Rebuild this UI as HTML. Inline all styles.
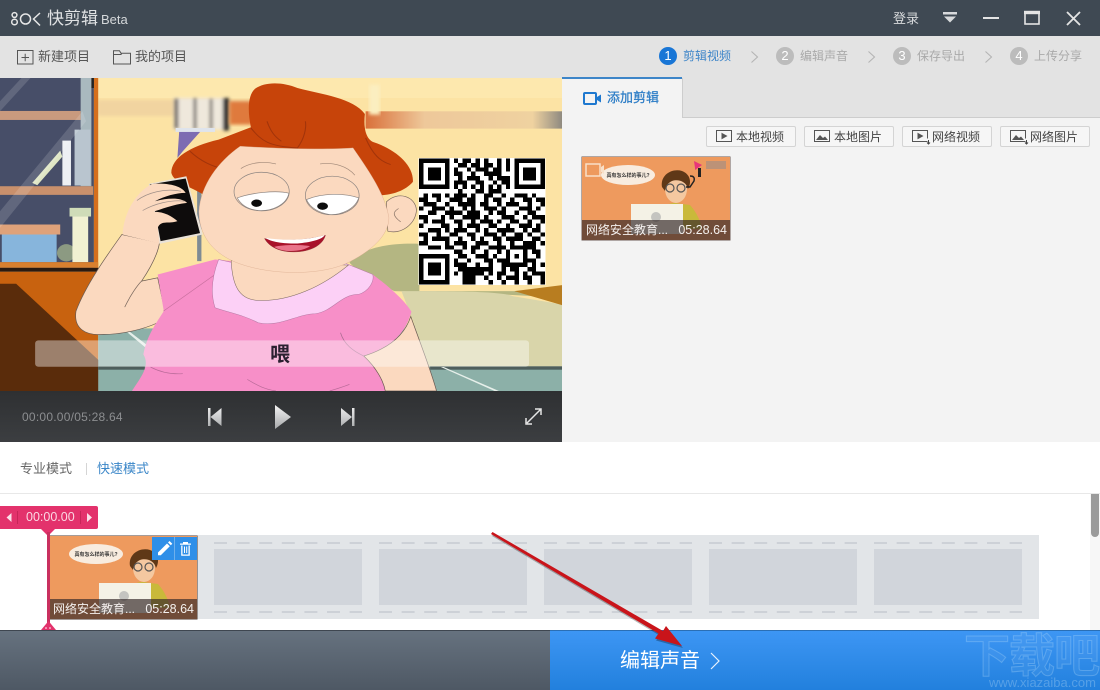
<!DOCTYPE html>
<html><head><meta charset="utf-8">
<style>
*{box-sizing:border-box;margin:0;padding:0}
html,body{width:1100px;height:690px;overflow:hidden;background:#fff;font-family:"Liberation Sans","Noto Sans CJK SC",sans-serif}
.a{position:absolute;white-space:nowrap}
svg{position:absolute;display:block;overflow:visible}
.btn{position:absolute;top:126px;width:90px;height:21px;background:#f6f6f6;border:1px solid #d4d4d4;border-radius:2px;font-size:12px;color:#444;line-height:20px;padding-left:29px;white-space:nowrap}
.num{position:absolute;top:47px;width:18px;height:18px;border-radius:50%;background:#bcbcbc;color:#fff;font-size:13px;line-height:18px;text-align:center}
.st{position:absolute;top:48px;font-size:12px;line-height:17px;color:#a9a9a9;white-space:nowrap}
.cell{position:absolute;top:549px;height:56px;background:#d1d5db}
</style></head><body>

<!-- title bar -->
<div class="a" style="left:0;top:0;width:1100px;height:36px;background:#3f4953"></div>
<svg style="left:10px;top:11px" width="32" height="16" viewBox="0 0 32 16" fill="none" stroke="#e6e6e6" stroke-width="1.5">
<circle cx="4.5" cy="4" r="2.4"/><circle cx="4.5" cy="11" r="2.800"/><circle cx="15.500" cy="8" r="5"/><path d="M30 2l-6.500 6 6.500 6.500"/></svg>
<div class="a" style="left:47px;top:9px;font-size:17px;line-height:20px;color:#dfe1e3">快剪辑</div>
<div class="a" style="left:101px;top:12px;font-size:13px;line-height:16px;color:#d5d8da">Beta</div>
<div class="a" style="left:893px;top:10px;font-size:13px;line-height:17px;color:#d8dadc">登录</div>
<svg style="left:940px;top:8px" width="150" height="20" viewBox="0 0 150 20" fill="none">
<path d="M3 4h14v2.500H3zM4 8.500h12L10 14.500z" fill="#d8dadc"/>
<path d="M43 10h16" stroke="#e4e4e4" stroke-width="2"/>
<rect x="85" y="4" width="14" height="12" stroke="#e4e4e4" stroke-width="1.600"/><path d="M84 4.500h16" stroke="#e4e4e4" stroke-width="3.400"/>
<path d="M127 4l13 13M140 4l-13 13" stroke="#e4e4e4" stroke-width="1.800"/></svg>

<!-- toolbar -->
<div class="a" style="left:0;top:36px;width:1100px;height:42px;background:#e3e3e3"></div>
<svg style="left:17px;top:50px" width="17" height="15" viewBox="0 0 17 15" fill="none" stroke="#555"><rect x=".5" y=".5" width="15.500" height="13.500"/><path d="M4.500 7.500h7.500M8.200 3.800v7.500"/></svg>
<div class="a" style="left:38px;top:48px;font-size:13px;line-height:18px;color:#555">新建项目</div>
<svg style="left:113px;top:50px" width="18" height="15" viewBox="0 0 18 15" fill="none" stroke="#555"><path d="M.5 14V.8h6l1.500 2.400h9.500V14zM.5 4.500H8l.8-1.300"/></svg>
<div class="a" style="left:135px;top:48px;font-size:13px;line-height:18px;color:#555">我的项目</div>

<div class="num" style="left:659px;background:#1976d6">1</div><div class="st" style="left:683px;color:#3c84c8">剪辑视频</div>
<div class="num" style="left:776px">2</div><div class="st" style="left:800px">编辑声音</div>
<div class="num" style="left:893px">3</div><div class="st" style="left:917px">保存导出</div>
<div class="num" style="left:1010px">4</div><div class="st" style="left:1034px">上传分享</div>
<svg style="left:750px;top:50px" width="250" height="14" viewBox="0 0 250 14" fill="none" stroke="#b4b4b4" stroke-width="1.100"><path d="M1.500 1.500l6 5.500-6 5.500M118.500 1.500l6 5.500-6 5.500M235.500 1.500l6 5.500-6 5.500"/></svg>

<!-- video scene -->
<div class="a" style="left:0;top:78px;width:562px;height:313px;overflow:hidden;background:#fbe09f">
<svg style="left:0;top:0" width="562" height="313" viewBox="0 0 1568 940" preserveAspectRatio="none">
<defs>
<linearGradient id="band" x1="0" x2="1" y1="0" y2="0"><stop offset="0" stop-color="#d9703a"/><stop offset=".3" stop-color="#eec89a"/><stop offset=".85" stop-color="#efd2a0"/><stop offset="1" stop-color="#8f8a80"/></linearGradient>
<filter id="b3"><feGaussianBlur stdDeviation="5"/></filter>
</defs>
<rect width="1568" height="940" fill="#fce3a4"/>
<rect x="272" y="0" width="1296" height="60" fill="#fde8ae"/>
<rect x="272" y="66" width="430" height="48" fill="#f1d4a0" filter="url(#b3)"/>
<rect x="1020" y="100" width="548" height="52" fill="url(#band)"/>
<rect x="1030" y="20" width="30" height="90" fill="#fbeec0" filter="url(#b3)"/>
<!-- shelf -->
<rect width="262" height="570" fill="#474e68"/>
<rect x="262" width="12" height="570" fill="#d56f1d"/>
<rect x="252" width="10" height="30" fill="#222"/>
<path d="M225 0h30v325h-30z" fill="#a9b9bf"/>
<rect y="99" width="225" height="27" fill="#c99a7e"/>
<rect y="325" width="260" height="26" fill="#c9906c"/>
<path d="M90 315L168 218l6 18-70 86z" fill="#dfe6c4"/>
<rect x="174" y="188" width="24" height="135" fill="#eef0f4"/>
<rect x="208" y="155" width="44" height="168" fill="#b9c5cf"/>
<rect x="0" y="440" width="168" height="30" fill="#dfa27a"/>
<rect x="5" y="470" width="153" height="83" fill="#87b5dc"/>
<circle cx="185" cy="525" r="26" fill="#8c9a82"/>
<rect x="194" y="390" width="60" height="26" fill="#cfdcb8"/>
<rect x="202" y="416" width="44" height="137" fill="#f1f1d2"/>
<path d="M60 0L0 70v30L85 0zM230 100L0 400v50L240 130z" fill="#fff" opacity=".14"/>
<rect y="553" width="274" height="17" fill="#d9802f"/>
<rect y="570" width="274" height="12" fill="#2a1a10"/>
<rect y="582" width="274" height="360" fill="#c8620f"/>
<path d="M0 618h45l323 322H0z" fill="#5a2c0b"/>
<!-- bed/floor -->
<path d="M975 555C1010 505 1100 495 1170 498V640H1568V660L1400 650 1100 640 1010 590z" fill="#b4b682"/>
<path d="M1120 640C1250 640 1400 640 1430 655L1568 680V860H1200z" fill="#d9d5aa"/>
<path d="M1435 640L1568 622V682z" fill="#b87d20"/>
<rect x="274" y="752" width="1294" height="188" fill="#8cb0a8"/>
<path d="M1120 740H1568V866H1195z" fill="#d9d5aa"/>
<rect x="1200" y="866" width="368" height="10" fill="#4e5e5c"/>
<rect x="274" y="866" width="130" height="10" fill="#4e5e5c"/>
<path d="M1230 868l150 72h12l-154-72zM350 752l60 50-6 6-62-56z" fill="#e6efea"/>
<!-- fork / stand -->
<rect x="550" y="220" width="12" height="330" fill="#7e8b94"/>
<g filter="url(#b3)"><rect x="485" y="60" width="150" height="95" fill="#efe8dc"/>
<rect x="487" y="62" width="10" height="90" fill="#56504f"/><rect x="540" y="60" width="8" height="95" fill="#5a5655"/><rect x="585" y="62" width="8" height="92" fill="#6c6660"/><rect x="622" y="60" width="16" height="98" fill="#1d1c22"/></g>
<rect x="640" y="70" width="70" height="70" fill="#df7a3c" filter="url(#b3)"/>
<path d="M500 160h60l-25 30-25 30-15 20z" fill="#7d6cb2"/>
<rect x="490" y="150" width="110" height="12" fill="#dfe4ec"/>
<!-- left arm -->
<path d="M340 470C300 530 240 620 212 700 205 750 235 775 290 770 340 770 400 755 440 735L460 700 440 600 395 610C420 570 440 530 445 495z" fill="#fbd9bf" stroke="#6a5a52" stroke-width="2"/>
<path d="M348 688C365 650 385 620 395 610" fill="none" stroke="#77665c" stroke-width="2"/>
<!-- dress -->
<path d="M368 940C392 900 420 865 400 830 410 770 440 730 457 700L440 590 600 545 1040 590C1090 630 1130 670 1148 702 1130 770 1090 810 1015 835 1050 870 1070 910 1075 940z" fill="#f78fc8"/>
<path d="M1015 835C1090 810 1130 770 1146 716 1170 790 1200 870 1218 940H1075C1070 910 1050 870 1015 835z" fill="#fbd9bf" stroke="#6a5a52" stroke-width="2"/>
<path d="M950 765C960 800 985 820 1015 835" fill="none" stroke="#a86a90" stroke-width="2"/>
<path d="M420 868C450 885 480 890 510 888M690 905C720 925 740 935 770 940M920 940C950 930 965 925 975 920" fill="none" stroke="#b86a98" stroke-width="2"/>
<path d="M600 590L456 700" fill="none" stroke="#c8709e" stroke-width="2"/>
<!-- collar -->
<path d="M610 545C590 600 588 650 600 690 640 705 680 712 720 735 780 750 830 708 880 708 930 700 950 650 1000 650 1030 640 1045 610 1040 590L960 555H650z" fill="#fcd0f6" stroke="#b87aa6" stroke-width="1.500"/>
<path d="M645 548C648 620 665 665 720 668 810 672 900 625 972 562z" fill="#fbd9bf" stroke="#7d6a60" stroke-width="1.500"/>
<!-- hair -->
<path d="M478 285C478 240 530 205 610 185L700 148C690 95 692 50 712 32 740 10 790 12 830 30 900 50 985 60 1018 108 1014 150 1020 180 1040 192 1100 212 1155 260 1152 312 1130 340 1090 352 1060 352H570C530 325 485 315 478 285z" fill="#c7440a"/>
<path d="M700 150C730 190 750 205 830 210 850 180 855 150 852 130M745 130C755 160 765 175 785 190M1020 180C1040 230 1060 250 1090 260M530 220C560 250 590 265 630 275" fill="none" stroke="#a2340a" stroke-width="3"/>
<!-- ear -->
<path d="M1078 372C1110 338 1160 355 1162 398 1158 440 1120 470 1082 460z" fill="#fbd9bf" stroke="#7d6a60" stroke-width="2"/>
<path d="M1112 392C1100 400 1090 410 1118 432" fill="none" stroke="#8a7568" stroke-width="2"/>
<!-- face -->
<path d="M670 205C780 212 900 216 985 210 1030 280 1075 350 1085 420 1085 470 1040 520 960 560 880 595 740 592 650 550 590 520 555 470 555 400 560 320 610 250 670 205z" fill="#fbd9bf" stroke="#d6a689" stroke-width="1"/>
<!-- eyes -->
<ellipse cx="730" cy="341" rx="77" ry="58" fill="#fbd9bf" stroke="#8c8480" stroke-width="2"/>
<ellipse cx="927" cy="353" rx="75" ry="58" fill="#fbd9bf" stroke="#8c8480" stroke-width="2"/>
<path d="M662 360C700 345 770 336 806 346 800 380 760 400 722 398 692 395 672 380 662 360z" fill="#fff" stroke="#8c8480" stroke-width="2"/>
<path d="M855 365C900 345 960 345 1001 360 990 395 950 412 920 410 890 405 865 390 855 365z" fill="#fff" stroke="#8c8480" stroke-width="2"/>
<ellipse cx="716" cy="376" rx="15" ry="11" fill="#0c0c0c"/><ellipse cx="900" cy="385" rx="15" ry="11" fill="#0c0c0c"/>
<path d="M672 272C700 252 740 250 770 258M893 258C930 252 970 265 990 292" fill="none" stroke="#a08878" stroke-width="2"/>
<!-- mouth -->
<path d="M738 482C800 492 860 486 908 472 900 505 860 525 810 522 775 520 750 505 738 482z" fill="#a8122a" stroke="#7a2a2a" stroke-width="1"/>
<path d="M740 480C800 490 860 486 906 472 900 485 865 494 830 497 800 497 760 495 740 480z" fill="#fff"/>
<path d="M765 507C790 500 840 500 865 505 845 522 790 526 765 507z" fill="#e9748a"/>
<!-- phone -->
<path d="M415 318L520 295 566 470 445 498z" fill="#e9e2d8"/>
<path d="M418 320L518 302 558 466 448 490z" fill="#0e0c0c"/>
<!-- hand -->
<path d="M342 470C345 400 385 338 425 318 465 315 505 322 518 345 490 345 460 355 432 370 470 360 505 358 522 375 480 380 450 395 425 402 455 400 480 415 495 430 470 440 450 425 440 450L445 497z" fill="#fbd9bf"/>
<path d="M382 368C410 345 460 330 505 340M398 398C430 378 475 365 515 370" fill="none" stroke="#a09088" stroke-width="2"/>
<!-- subtitle bar -->
<rect x="98" y="788" width="1378" height="79" rx="9" fill="#fff" opacity=".4"/>
</svg>
</div>
<div class="a" style="left:270px;top:345px;font-size:20px;line-height:20px;font-weight:bold;color:#2a2030">喂</div>

<!-- QR -->
<svg style="left:418px;top:158px" width="128" height="127" viewBox="-.15 -.15 29.3 29.3" shape-rendering="crispEdges">
<rect x="-.15" y="-.15" width="29.3" height="29.3" fill="#fff"/>
<g fill="none" stroke="#000"><rect x=".5" y=".5" width="6" height="6"/><rect x="22.500" y=".5" width="6" height="6"/><rect x=".5" y="22.500" width="6" height="6"/></g>
<path fill="#000" d="M2 2h3v3H2zM24 2h3v3h-3zM2 24h3v3H2z"/>
<path stroke="#000" stroke-width="1.02" fill="none" d="M8 .5h1M10 .5h2M13 .5h1M15 .5h1M18 .5h1M20 .5h1
M9 1.500h2M12 1.500h2M15 1.500h2M18 1.500h1M20 1.500h1
M8 2.500h1M11 2.500h1M13 2.500h3M17 2.500h2M20 2.500h1
M8 3.500h2M12 3.500h1M15 3.500h4
M9 4.500h1M11 4.500h3M16 4.500h1M18 4.500h3
M8 5.500h3M13 5.500h2M17 5.500h1M19 5.500h2
M8 6.500h1M10 6.500h1M12 6.500h1M14 6.500h1M16 6.500h1M18 6.500h1M20 6.500h1
M9 7.500h1M13 7.500h2M16 7.500h3
M1 8.500h1M3 8.500h2M6 8.500h1M8 8.500h3M12 8.500h1M15 8.500h2M19 8.500h1M22 8.500h3M26 8.500h1
M0 9.500h2M4 9.500h1M7 9.500h3M11 9.500h2M15 9.500h1M17 9.500h2M21 9.500h1M24 9.500h2M27 9.500h2
M1 10.500h3M6 10.500h1M9 10.500h4M14 10.500h2M18 10.500h1M20 10.500h3M25 10.500h1M28 10.500h1
M0 11.500h1M3 11.500h3M7 11.500h1M10 11.500h1M12 11.500h1M15 11.500h3M19 11.500h1M23 11.500h3M27 11.500h1
M2 12.500h2M6 12.500h4M11 12.500h3M16 12.500h1M18 12.500h2M22 12.500h1M25 12.500h2
M0 13.500h2M5 13.500h1M7 13.500h1M10 13.500h4M15 13.500h1M19 13.500h3M24 13.500h1M26 13.500h3
M1 14.500h1M3 14.500h3M8 14.500h2M12 14.500h1M14 14.500h3M18 14.500h1M21 14.500h2M25 14.500h1M28 14.500h1
M0 15.500h1M5 15.500h2M9 15.500h1M11 15.500h3M16 15.500h2M20 15.500h1M23 15.500h3M27 15.500h1
M2 16.500h3M6 16.500h1M8 16.500h3M13 16.500h1M15 16.500h1M18 16.500h4M24 16.500h1M26 16.500h2
M0 17.500h2M4 17.500h1M7 17.500h2M11 17.500h2M15 17.500h3M19 17.500h1M22 17.500h2M25 17.500h1M28 17.500h1
M1 18.500h1M3 18.500h4M9 18.500h1M12 18.500h1M14 18.500h1M17 18.500h2M20 18.500h4M26 18.500h2
M0 19.500h2M6 19.500h1M8 19.500h3M13 19.500h3M18 19.500h1M21 19.500h1M24 19.500h3M28 19.500h1
M2 20.500h3M6 20.500h2M10 20.500h1M12 20.500h2M16 20.500h4M21 20.500h6
M8 21.500h2M12 21.500h1M15 21.500h1M18 21.500h1M20 21.500h1M24 21.500h1M26 21.500h2
M9 22.500h2M13 22.500h3M17 22.500h1M20 22.500h1M22 22.500h1M24 22.500h1M27 22.500h1
M8 23.500h1M11 23.500h1M15 23.500h2M18 23.500h2M20 23.500h1M24 23.500h3
M8 24.500h3M13 24.500h1M16 24.500h1M19 24.500h6M26 24.500h1M28 24.500h1
M9 25.500h8M19 25.500h1M21 25.500h2M25 25.500h2
M8 26.500h1M10 26.500h5M16 26.500h1M18 26.500h2M22 26.500h1M24 26.500h1M26 26.500h3
M10 27.500h3M15 27.500h1M18 27.500h1M20 27.500h3M24 27.500h2M28 27.500h1
M10 28.500h3M16 28.500h1M19 28.500h1M22 28.500h1M25 28.500h1M28 28.500h1"/>
</svg>

<!-- player bar -->
<div class="a" style="left:0;top:391px;width:562px;height:51px;background:linear-gradient(#2e3032,#3c3e41)"></div>
<div class="a" style="left:22px;top:410px;font-size:12px;line-height:15px;color:#8c8e90;letter-spacing:.02em">00:00.00/05:28.64</div>
<svg style="left:200px;top:400px" width="170" height="34" viewBox="0 0 170 34">
<defs><linearGradient id="pg" x1="0" x2="0" y1="0" y2="1"><stop offset="0" stop-color="#f4f4f4"/><stop offset="1" stop-color="#a6a8aa"/></linearGradient></defs>
<path fill="url(#pg)" d="M8 8h2.500v18H8zM21.500 8v18L10.500 17zM75 5l16 12-16 12zM141 8l11 9-11 9zM152 8h2.500v18H152z"/></svg>
<svg style="left:524px;top:407px" width="19" height="19" viewBox="0 0 19 19" fill="none" stroke="#e6e6e6" stroke-width="1.500"><path d="M3 16L16.500 2.500M11 2h6v6M2 11v6h6" /></svg>

<!-- right pane -->
<div class="a" style="left:562px;top:78px;width:538px;height:364px;background:#f3f3f3"></div>
<div class="a" style="left:682px;top:78px;width:418px;height:40px;background:#e3e3e3;border-bottom:1px solid #cdcdcd;border-left:1px solid #cdcdcd"></div>
<div class="a" style="left:562px;top:77px;width:120px;height:2px;background:#3d85c8"></div>
<svg style="left:582px;top:91px" width="20" height="15" viewBox="0 0 20 15" fill="none"><rect x="2" y="2" width="12" height="11" rx="1" stroke="#1e78cf" stroke-width="2"/><path d="M15 6l4-2.500v8L15 9z" fill="#1e78cf"/></svg>
<div class="a" style="left:607px;top:89px;font-size:13px;line-height:18px;color:#2b7cc6;-webkit-text-stroke:.25px #2b7cc6">添加剪辑</div>
<div class="btn" style="left:706px">本地视频</div>
<div class="btn" style="left:804px">本地图片</div>
<div class="btn" style="left:902px">网络视频</div>
<div class="btn" style="left:1000px">网络图片</div>
<svg style="left:716px;top:129px" width="370" height="16" viewBox="0 0 370 16" fill="none" stroke="#555">
<rect x=".5" y="1.500" width="15" height="11"/><path d="M6 4.500l4.500 2.500L6 9.500z" fill="#555"/>
<rect x="98.500" y="1.500" width="15" height="11"/><path d="M100 11l4-5 3 3 2-1.500 3 3.500z" fill="#555" stroke="none"/>
<path d="M211.500 12.500h-15v-11h15v8"/><path d="M202 4.500l4.500 2.500-4.500 2.500z" fill="#555"/><path d="M212.500 11v4M211 13.500l1.500 1.500 1.500-1.500" stroke="#444"/>
<path d="M309.500 12.500h-15v-11h15v8"/><path d="M296 11l4-5 3 3 2-1.500 3 3.500z" fill="#555" stroke="none"/><path d="M310.500 11v4M309 13.500l1.500 1.500 1.500-1.500" stroke="#444"/>
</svg>

<!-- thumb 1 -->
<div class="a" style="left:582px;top:157px;width:148px;height:83px;background:#ee9a5e;overflow:hidden;box-shadow:0 0 0 .5px #6b5a55">
<svg style="left:0;top:0" width="148" height="83" viewBox="0 0 148 83">
<ellipse cx="46" cy="18" rx="27" ry="10" fill="#f8ecdf"/><text x="46" y="20" font-size="5" font-weight="bold" text-anchor="middle" fill="#333">真有怎么样的事儿?</text>
<path d="M75 62C78 50 85 46 93 46L108 48C114 55 118 62 120 72H75z" fill="#c9b93a"/>
<ellipse cx="94" cy="32" rx="11" ry="14" fill="#f4c8a0"/>
<path d="M80 30C78 18 90 11 100 14 108 17 110 25 106 32 104 24 96 22 90 24 86 26 84 28 83 34z" fill="#5f3817"/>
<g fill="none" stroke="#555" stroke-width="1.200"><circle cx="88" cy="31" r="4"/><circle cx="99" cy="31" r="4"/></g>
<rect x="49" y="47" width="52" height="30" fill="#f4f2e6"/><circle cx="74" cy="60" r="5" fill="#c4c4c0"/>
<rect x="4" y="7" width="14" height="12" fill="none" stroke="#f8e0c8" stroke-width="1.500"/><path d="M19 10l3-2v9l-3-2z" fill="#f8e0c8"/>
<path d="M112 4l8 4-7 5v-2z" fill="#e8357a"/><path d="M124 4h20v8h-20z" fill="#8a8a90" opacity=".5"/>
<path d="M108 19c3 0 5 1 4 5l-4 6-4 0" fill="none" stroke="#222" stroke-width="1.500"/><rect x="116" y="11" width="3" height="9" fill="#222"/>
</svg>
<div class="a" style="left:0;top:63px;width:148px;height:20px;background:rgba(52,40,40,.68)"></div>
<div class="a" style="left:4px;top:66px;font-size:12px;line-height:15px;color:#f4f0ee">网络安全教育...</div>
<div class="a" style="right:3px;top:66px;font-size:12.500px;line-height:15px;color:#f4f0ee">05:28.64</div>
</div>

<!-- mode tabs -->
<div class="a" style="left:20px;top:460px;font-size:13px;line-height:18px;color:#666">专业模式</div>
<div class="a" style="left:86px;top:463px;width:1px;height:12px;background:#d5d5d5"></div>
<div class="a" style="left:97px;top:460px;font-size:13px;line-height:18px;color:#3a86c8">快速模式</div>
<div class="a" style="left:0;top:493px;width:1100px;height:1px;background:#e8e8e8"></div>

<!-- film strip -->
<div class="a" style="left:197px;top:535px;width:842px;height:84px;background:#e2e5e8"></div>
<svg style="left:197px;top:535px" width="842" height="84" viewBox="0 0 842 84">
<path stroke="#cdd1d7" stroke-width="2" stroke-dasharray="13 9.600" fill="none" d="M17 8H165M182 8H330M347 8H495M512 8H660M677 8H825M17 77H165M182 77H330M347 77H495M512 77H660M677 77H825"/></svg>
<div class="cell" style="left:214px;width:148px"></div>
<div class="cell" style="left:379px;width:148px"></div>
<div class="cell" style="left:544px;width:148px"></div>
<div class="cell" style="left:709px;width:148px"></div>
<div class="cell" style="left:874px;width:148px"></div>

<!-- thumb 2 -->
<div class="a" style="left:50px;top:536px;width:147px;height:83px;background:#ee9a5e;overflow:hidden;box-shadow:0 0 0 .5px #4a3a35">
<svg style="left:0;top:0" width="148" height="83" viewBox="0 0 148 83">
<ellipse cx="46" cy="18" rx="27" ry="10" fill="#f8ecdf"/><text x="46" y="20" font-size="5" font-weight="bold" text-anchor="middle" fill="#333">真有怎么样的事儿?</text>
<path d="M75 62C78 50 85 46 93 46L108 48C114 55 118 62 120 72H75z" fill="#c9b93a"/>
<ellipse cx="94" cy="32" rx="11" ry="14" fill="#f4c8a0"/>
<path d="M80 30C78 18 90 11 100 14 108 17 110 25 106 32 104 24 96 22 90 24 86 26 84 28 83 34z" fill="#5f3817"/>
<g fill="none" stroke="#555" stroke-width="1.200"><circle cx="88" cy="31" r="4"/><circle cx="99" cy="31" r="4"/></g>
<rect x="49" y="47" width="52" height="30" fill="#f4f2e6"/><circle cx="74" cy="60" r="5" fill="#c4c4c0"/>
</svg>
<div class="a" style="left:0;top:63px;width:148px;height:20px;background:rgba(52,40,40,.68)"></div>
<div class="a" style="left:3px;top:66px;font-size:12px;line-height:15px;color:#f4f0ee">网络安全教育...</div>
<div class="a" style="right:3px;top:66px;font-size:12.500px;line-height:15px;color:#f4f0ee">05:28.64</div>
</div>
<div class="a" style="left:152px;top:537px;width:45px;height:23px;background:#2f8fe8"></div>
<div class="a" style="left:174px;top:537px;width:1px;height:23px;background:#6fb0ec"></div>
<svg style="left:152px;top:537px" width="45" height="23" viewBox="0 0 45 23" fill="#fff">
<path d="M6 15.500l9-9 2.800 2.800-9 9H6zM16 5.500l1.500-1.500 2.800 2.800-1.500 1.500z"/>
<path d="M28 6.500h11v1.200H28zM31 5h5v1.500h-5zM29.200 8.500h1.300v9h6v-9h1.300v10.300h-8.600zM32 9.500h1v6.500h-1zM34.200 9.500h1v6.500h-1z"/></svg>

<!-- playhead -->
<div class="a" style="left:0;top:506px;width:98px;height:23px;background:#e3326c;border-radius:0 2px 2px 0"></div>
<div class="a" style="left:26px;top:509px;font-size:12.500px;line-height:16px;color:#fbd7e3">00:00.00</div>
<svg style="left:0;top:506px" width="98" height="126" viewBox="0 0 98 126">
<path d="M11.500 7v9L6.500 11.500zM87 7v9l5-4.500z" fill="#fbe0e9"/>
<path d="M17.500 5v13M80.500 5v13" stroke="#c72558" fill="none"/>
<path d="M41 23h14l-7 7z" fill="#e3326c"/>
<rect x="47" y="26" width="3" height="92" fill="#c9305f"/>
<path d="M41 124l7.500-9 7.500 9z" fill="#e3326c"/><circle cx="46" cy="122" r=".8" fill="#fff"/><circle cx="50" cy="122" r=".8" fill="#fff"/>
</svg>

<!-- scrollbar -->
<div class="a" style="left:1090px;top:494px;width:10px;height:136px;background:#f7f7f7"></div>
<div class="a" style="left:1091px;top:494px;width:8px;height:43px;background:#9b9b9b;border-radius:0 0 4px 4px"></div>

<!-- bottom bar -->
<div class="a" style="left:0;top:630px;width:550px;height:60px;background:linear-gradient(#66727f,#4e5864);border-top:1px solid #3e4650"></div>
<div class="a" style="left:550px;top:630px;width:550px;height:60px;background:linear-gradient(#3d96f4,#2280dd);border-top:1px solid #2a6fb5"></div>
<div class="a" style="left:620px;top:648px;font-size:20px;line-height:26px;color:#fff">编辑声音</div>
<svg style="left:708px;top:651px" width="14" height="20" viewBox="0 0 14 20" fill="none" stroke="#e8f2fd" stroke-width="1.200"><path d="M3 2l8 8-8 8"/></svg>
<div class="a" style="left:964px;top:630px;font-size:46px;line-height:52px;font-weight:bold;color:rgba(255,255,255,.05);-webkit-text-stroke:1px rgba(190,225,250,.28);letter-spacing:-1px">下载吧</div>
<div class="a" style="left:989px;top:675px;font-size:13px;line-height:15px;color:rgba(200,230,250,.3)">www.xiazaiba.com</div>

<!-- red arrow -->
<svg style="left:0;top:0" width="1100" height="690" viewBox="0 0 1100 690">
<path d="M491 534l1.500-2L663 631l3-5L682 646l-27-7.500 3.500-5z" fill="#000" opacity=".28" transform="translate(1 2)"/>
<path d="M491 534l1.500-2L663 631l3-5L682 646l-27-7.500 3.500-5z" fill="#c9141a"/>
</svg>
</body></html>
